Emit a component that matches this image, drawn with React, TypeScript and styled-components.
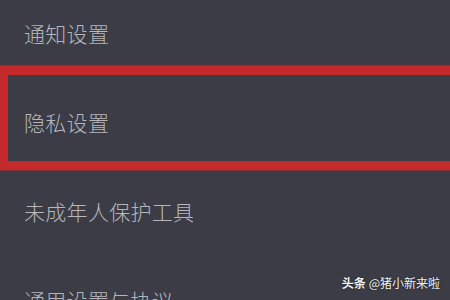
import styled, { createGlobalStyle } from "styled-components";

const GlobalStyle = createGlobalStyle`
    html, body {
        margin: 0;
        padding: 0;
        background: #3b3c45;
    }
    body {
        width: 450px;
        height: 300px;
        overflow: hidden;
        font-family: "Noto Sans CJK SC", "Noto Sans", sans-serif;
    }
`;

const Screen = styled.div`
    position: relative;
    width: 450px;
    height: 300px;
    overflow: hidden;
    background: #3b3c45;
`;

const SettingsList = styled.ul`
    list-style: none;
    margin: -12px 0 0;
    padding: 0;
`;

const SettingRow = styled.li<{ $marked?: boolean }>`
    position: relative;
    height: 89px;
    display: flex;
    align-items: center;
    padding-left: 24px;
    color: #b6b6bb;
    font-size: 21px;
    font-weight: 300;
    letter-spacing: 0.3px;
    &::after {
        content: "";
        display: ${props => (props.$marked ? "block" : "none")};
        position: absolute;
        top: -11px;
        bottom: -4px;
        left: -1px;
        right: -20px;
        border: 9px solid #c42a2b;
        box-shadow: 0 0 1px 1px rgba(196, 42, 43, 0.5);
    }
`;

const Watermark = styled.div`
    position: absolute;
    right: 10px;
    bottom: 9px;
    display: flex;
    align-items: baseline;
    gap: 3px;
    color: #f2f2f2;
    font-size: 12px;
    text-shadow: 0 0 2px rgba(0, 0, 0, 0.6);
`;

const Brand = styled.span`
    font-weight: 700;
`;

const settings = ["通知设置", "隐私设置", "未成年人保护工具", "通用设置与协议"];

function App() {
    return (
        <Screen>
            <GlobalStyle />
            <SettingsList>
                {settings.map((label, i) => (
                    <SettingRow key={label} $marked={i === 1}>
                        {label}
                    </SettingRow>
                ))}
            </SettingsList>
            <Watermark>
                <Brand>头条</Brand>
                <span>@猪小新来啦</span>
            </Watermark>
        </Screen>
    );
}

export default App;
